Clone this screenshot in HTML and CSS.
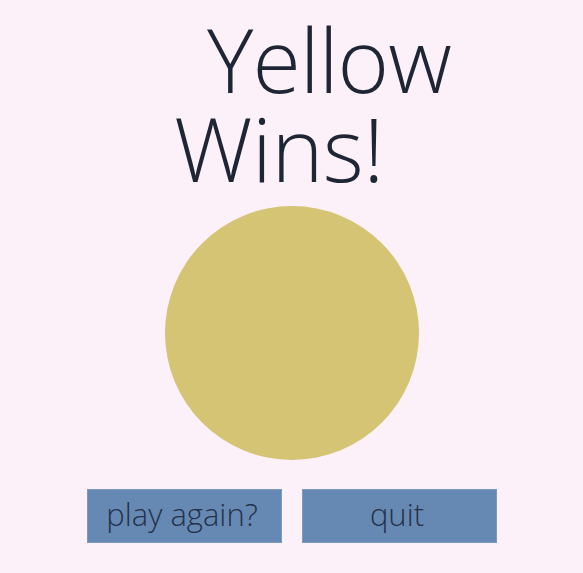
FILE: index.html
```html
<!DOCTYPE html>
<html lang="en">
<head>
    <meta charset="UTF-8">
    <meta name="viewport" content="width=device-width, initial-scale=1.0">
    <title>Connect Four</title>
    <link rel="stylesheet" href="styles.css">
</head>
<body>
    <div class="game-over">
        <h1 class="winner">
            <span class="winner-name">Yellow</span>
            <span class="winner-text">Wins!</span>
        </h1>
        <div class="disc yellow"></div>
        <div class="buttons">
            <button id="playAgain">play again?</button>
            <button id="quit">quit</button>
        </div>
    </div>
</body>
</html>
```

FILE: styles.css
```css
body {
    margin: 0;
    background-color: #fcf1f8;
    font-family: "Open Sans", sans-serif;
    color: #1e2535;
}

.game-over {
    display: flex;
    flex-direction: column;
    align-items: center;
    padding-top: 15px;
}

.winner {
    align-self: flex-start;
    margin: 0 0 0 174px;
    font-size: 88px;
    font-weight: 300;
    line-height: 89px;
    letter-spacing: -0.5px;
}

.winner span {
    display: block;
}

.winner-name {
    padding-left: 33px;
    letter-spacing: -1px;
}

.disc {
    width: 254px;
    height: 254px;
    border-radius: 50%;
    margin-top: 13px;
}

.yellow {
    background-color: #d4c473;
}

.buttons {
    display: flex;
    gap: 20px;
    margin-top: 29px;
}

.buttons button {
    width: 195px;
    height: 54px;
    padding: 0 4px 5px 0;
    border: 1px solid #7d9bc0;
    background-color: #6689b4;
    color: #253149;
    font-family: "Open Sans", sans-serif;
    font-size: 31px;
    font-weight: 300;
    cursor: pointer;
}
```
